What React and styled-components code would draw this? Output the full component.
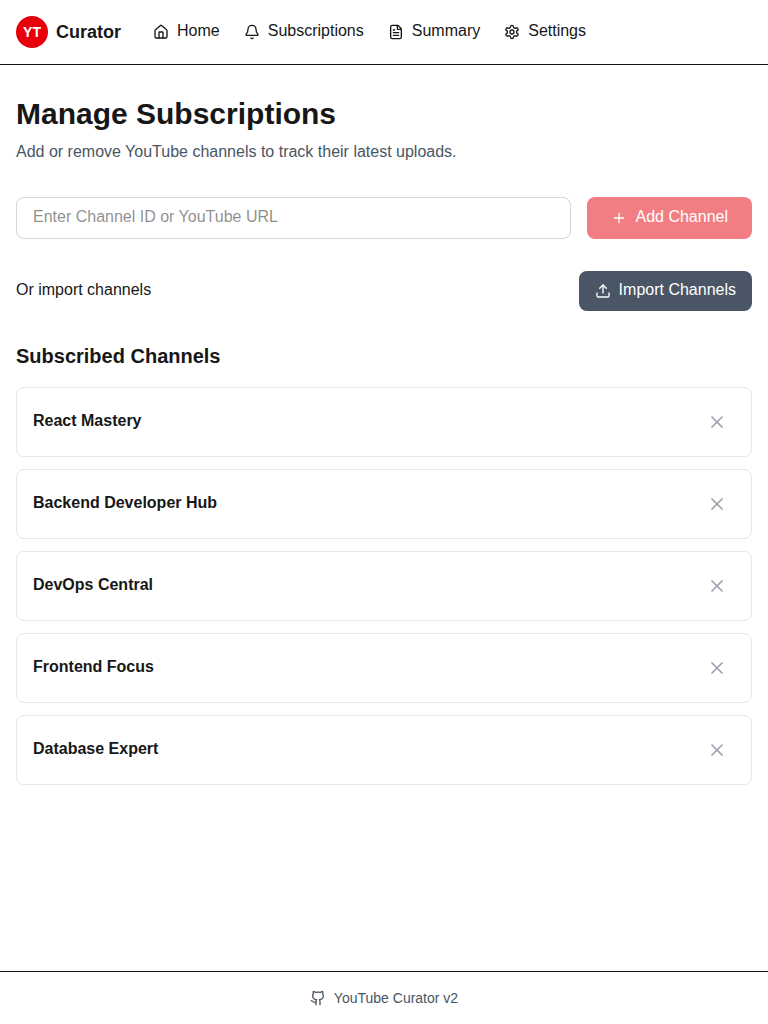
import React from "react";
import styled, { createGlobalStyle } from "styled-components";
import { House, Bell, FileText, Plus, Upload, X, Github } from "lucide-react";

const GlobalStyle = createGlobalStyle`
  *, *::before, *::after { box-sizing: border-box; }
  body {
    margin: 0;
    background: #fff;
    color: #171717;
    font: 16px/24px "Liberation Sans", Arial, sans-serif;
  }
  h1, h2, h3, p { margin: 0; }
  svg { display: block; flex-shrink: 0; }
`;

const Page = styled.div`
  min-height: 100vh;
  display: flex;
  flex-direction: column;
`;

const Header = styled.header`
  height: 65px;
  padding: 0 16px;
  display: flex;
  align-items: center;
  gap: 32px;
  border-bottom: 1px solid #171717;
`;

const Brand = styled.div`
  display: flex;
  align-items: center;
  gap: 8px;
  font-size: 18px;
  line-height: 28px;
  font-weight: 700;
`;

const Logo = styled.span`
  width: 32px;
  height: 32px;
  border-radius: 50%;
  background: #e7000b;
  color: #fff;
  font-size: 14px;
  line-height: 20px;
  display: flex;
  align-items: center;
  justify-content: center;
`;

const Nav = styled.nav`
  display: flex;
  gap: 24px;
`;

const NavLink = styled.a`
  display: flex;
  align-items: center;
  gap: 8px;
  span { margin-top: -2px; }
`;

const Main = styled.main`
  flex: 1;
  padding: 31px 16px 32px;
`;

const Title = styled.h1`
  font-size: 30px;
  line-height: 36px;
  margin-bottom: 8px;
`;

const Subtitle = styled.p`
  color: #4a5565;
  line-height: 24px;
`;

const AddForm = styled.div`
  display: flex;
  gap: 16px;
  margin: 33px 0 32px;
`;

const ChannelInput = styled.input`
  flex: 1;
  min-width: 0;
  height: 42px;
  padding: 6px 16px 8px;
  border: 1px solid #d1d5dc;
  border-radius: 8px;
  font: inherit;
  outline: none;
  background: #fff;
  &::placeholder { color: rgba(23, 23, 23, 0.5); opacity: 1; }
`;

const Button = styled.button`
  display: flex;
  align-items: center;
  gap: 8px;
  height: ${(p) => (p.$primary ? 42 : 40)}px;
  padding: 0 ${(p) => (p.$primary ? 24 : 16)}px;
  border: 0;
  border-radius: 8px;
  background: ${(p) => (p.$primary ? "#e7000b" : "#4a5565")};
  opacity: ${(p) => (p.$primary ? 0.5 : 1)};
  color: #fff;
  font: inherit;
  span { margin-top: -3px; }
`;

const ImportRow = styled.div`
  display: flex;
  align-items: center;
  justify-content: space-between;
  margin-bottom: 31px;
  > span { margin-top: -2px; }
`;

const SectionTitle = styled.h2`
  font-size: 20px;
  line-height: 28px;
  margin-bottom: 17px;
`;

const ChannelList = styled.div`
  display: flex;
  flex-direction: column;
  gap: 12px;
`;

const ChannelCard = styled.div`
  height: 70px;
  padding: 0 16px;
  display: flex;
  align-items: center;
  justify-content: space-between;
  border: 1px solid #e5e7eb;
  border-radius: 8px;
`;

const ChannelName = styled.h3`
  font-size: 16px;
  line-height: 24px;
  margin-top: -3px;
`;

const RemoveButton = styled.button`
  padding: 8px;
  border: 0;
  background: none;
  color: #99a1af;
`;

const Footer = styled.footer`
  height: 53px;
  border-top: 1px solid #171717;
  display: flex;
  align-items: center;
  justify-content: center;
  gap: 8px;
  color: #4a5565;
  font-size: 14px;
  line-height: 20px;
`;

function GearIcon({ size }) {
  return (
    <svg width={size} height={size} viewBox="0 0 24 24" fill="none" stroke="currentColor" strokeWidth="2" strokeLinecap="round" strokeLinejoin="round">
      <path d="M12.22 2h-.44a2 2 0 0 0-2 2v.18a2 2 0 0 1-1 1.73l-.43.25a2 2 0 0 1-2 0l-.15-.08a2 2 0 0 0-2.73.73l-.22.38a2 2 0 0 0 .73 2.73l.15.1a2 2 0 0 1 1 1.72v.51a2 2 0 0 1-1 1.74l-.15.09a2 2 0 0 0-.73 2.73l.22.38a2 2 0 0 0 2.73.73l.15-.08a2 2 0 0 1 2 0l.43.25a2 2 0 0 1 1 1.73V20a2 2 0 0 0 2 2h.44a2 2 0 0 0 2-2v-.18a2 2 0 0 1 1-1.73l.43-.25a2 2 0 0 1 2 0l.15.08a2 2 0 0 0 2.73-.73l.22-.39a2 2 0 0 0-.73-2.73l-.15-.08a2 2 0 0 1-1-1.74v-.5a2 2 0 0 1 1-1.74l.15-.09a2 2 0 0 0 .73-2.73l-.22-.38a2 2 0 0 0-2.73-.73l-.15.08a2 2 0 0 1-2 0l-.43-.25a2 2 0 0 1-1-1.73V4a2 2 0 0 0-2-2z" />
      <circle cx="12" cy="12" r="3" />
    </svg>
  );
}

const links = [
  ["Home", House],
  ["Subscriptions", Bell],
  ["Summary", FileText],
  ["Settings", GearIcon],
];

const channels = ["React Mastery", "Backend Developer Hub", "DevOps Central", "Frontend Focus", "Database Expert"];

export default function App() {
  return (
    <Page>
      <GlobalStyle />
      <Header>
        <Brand><Logo>YT</Logo>Curator</Brand>
        <Nav>
          {links.map(([label, Icon]) => (
            <NavLink key={label}><Icon size={16} /><span>{label}</span></NavLink>
          ))}
        </Nav>
      </Header>
      <Main>
        <Title>Manage Subscriptions</Title>
        <Subtitle>Add or remove YouTube channels to track their latest uploads.</Subtitle>
        <AddForm>
          <ChannelInput placeholder="Enter Channel ID or YouTube URL" />
          <Button $primary><Plus size={16} /><span>Add Channel</span></Button>
        </AddForm>
        <ImportRow>
          <span>Or import channels</span>
          <Button><Upload size={16} /><span>Import Channels</span></Button>
        </ImportRow>
        <SectionTitle>Subscribed Channels</SectionTitle>
        <ChannelList>
          {channels.map((name) => (
            <ChannelCard key={name}>
              <ChannelName>{name}</ChannelName>
              <RemoveButton aria-label={`Remove ${name}`}><X size={20} /></RemoveButton>
            </ChannelCard>
          ))}
        </ChannelList>
      </Main>
      <Footer><Github size={16} /><span>YouTube Curator v2</span></Footer>
    </Page>
  );
}
